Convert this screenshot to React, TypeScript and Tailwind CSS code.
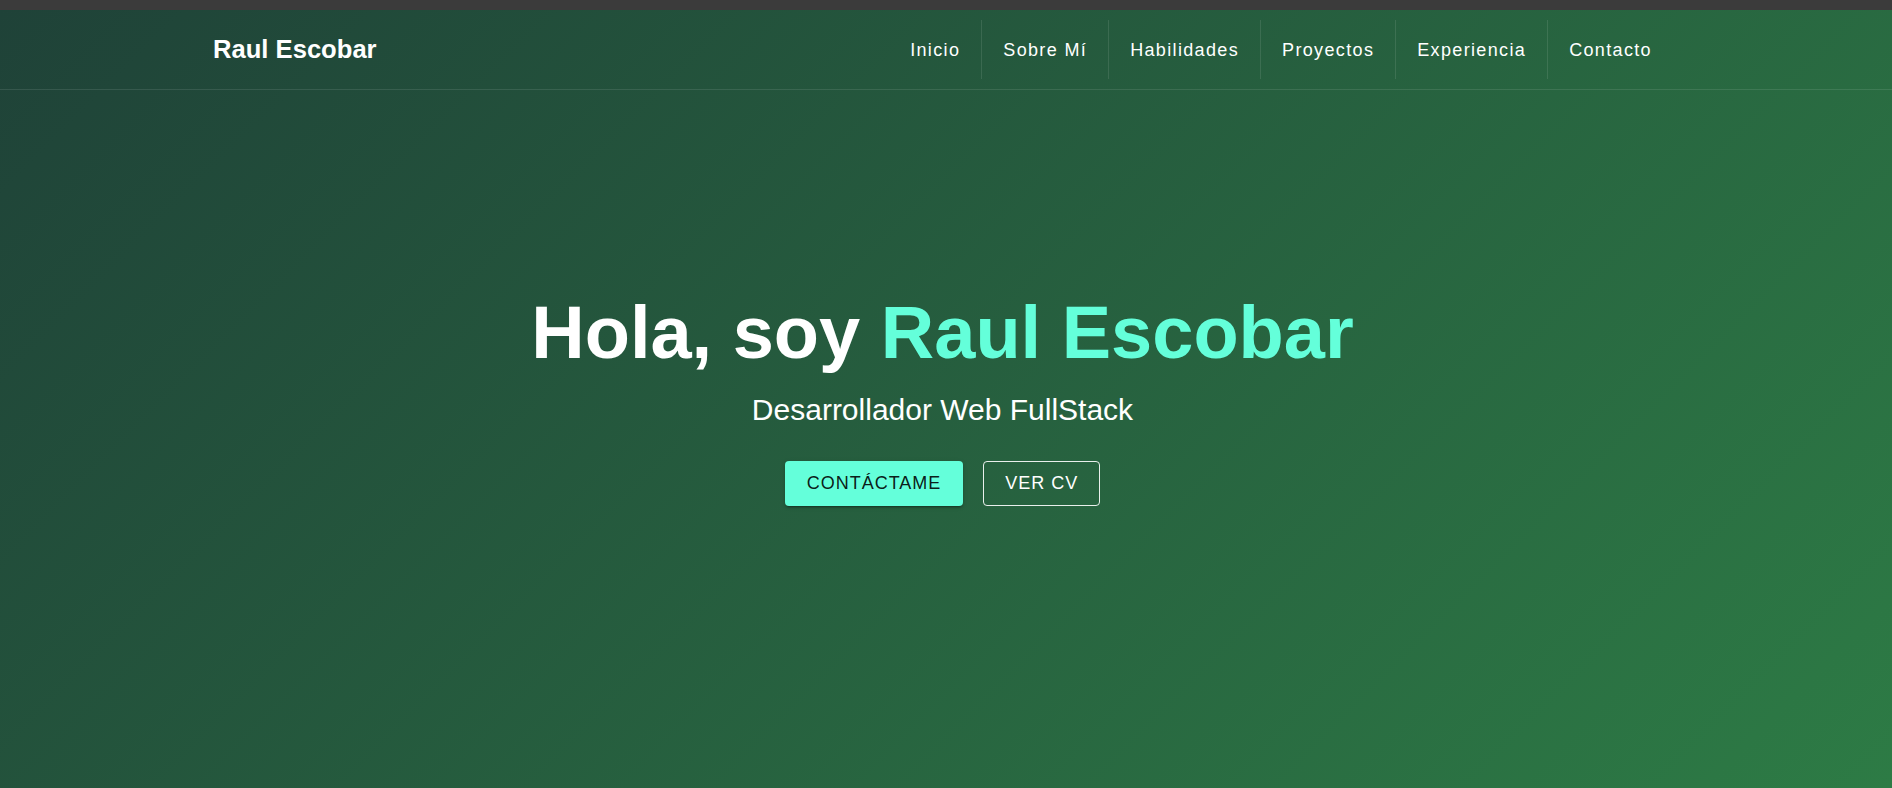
import React from "react";

const NAV_ITEMS = ["Inicio", "Sobre Mí", "Habilidades", "Proyectos", "Experiencia", "Contacto"];

const FONT = "font-['Liberation_Sans',Arial,sans-serif]";

const App: React.FC = () => {
  return (
    <div className={`w-full h-[788px] overflow-hidden flex flex-col ${FONT}`}>
      {/* thin dark strip on top */}
      <div className="h-[10px] bg-[#3b3b3b] shrink-0" />
      <div className="flex-1 flex flex-col bg-[linear-gradient(135deg,#1f4238_0%,#2d7b45_100%)]">
        <header className="h-[80px] shrink-0 border-b border-white/10">
          <div className="ml-[213px] w-[1460px] h-full flex items-center justify-between">
            <a href="#" className="text-white font-bold text-[25.6px] leading-none">
              Raul Escobar
            </a>
            <nav>
              <ul className="flex items-center">
                {NAV_ITEMS.map((item, i) => (
                  <li
                    key={item}
                    className={
                      "h-[59px] flex items-center px-[21px] " + (i > 0 ? "border-l border-white/10" : "")
                    }
                  >
                    <a href="#" className="text-white text-[18px] tracking-[1.35px] leading-none">
                      {item}
                    </a>
                  </li>
                ))}
              </ul>
            </nav>
          </div>
        </header>

        <section className="flex-1 flex flex-col items-center pt-[206px] pr-[7px] text-center">
          <h1 className="text-white font-bold text-[74px] leading-none">
            Hola, soy <span className="text-[#64ffda]">Raul Escobar</span>
          </h1>
          <p className="mt-[25px] text-white text-[30px] leading-none">Desarrollador Web FullStack</p>
          <div className="mt-[36px] flex gap-5">
            <button
              type="button"
              className="h-[45px] px-[22px] rounded bg-[#64ffda] text-black/90 text-[18px] tracking-[1px] uppercase shadow-[0_3px_1px_-2px_rgba(0,0,0,0.2),0_2px_2px_0_rgba(0,0,0,0.14),0_1px_5px_0_rgba(0,0,0,0.12)]"
            >
              Contáctame
            </button>
            <button
              type="button"
              className="h-[45px] px-[21px] rounded border border-white/90 text-white text-[18px] tracking-[1px] uppercase"
            >
              Ver CV
            </button>
          </div>
        </section>
      </div>
    </div>
  );
};

export default App;
